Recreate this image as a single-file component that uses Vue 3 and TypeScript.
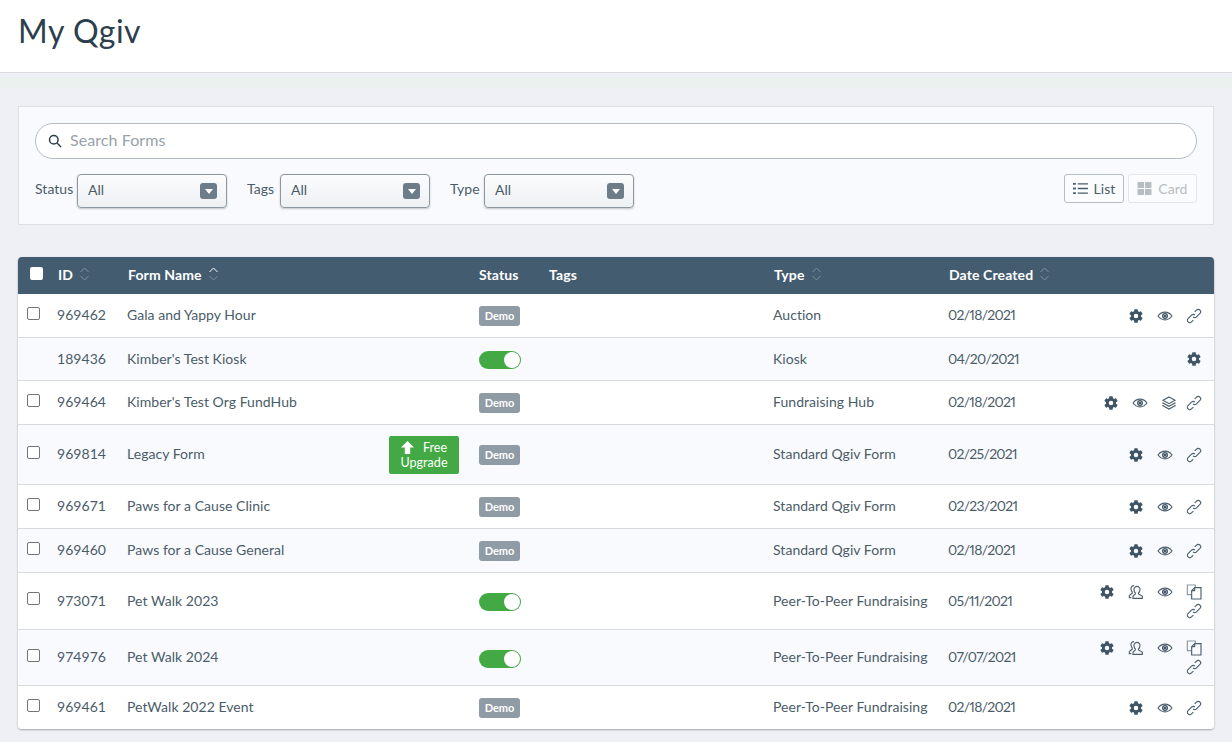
<script setup lang="ts">
interface Icon { fill?: string[]; stroke?: string[]; light?: string[] }
interface Row {
  id: string; name: string; status: 'demo' | 'on'; type: string; date: string;
  h: number; check: boolean; upgrade?: boolean; actions: string[]; tight?: boolean;
}
const gear = 'M19.14 12.94c.04-.3.06-.61.06-.94 0-.32-.02-.64-.07-.94l2.03-1.58a.49.49 0 0 0 .12-.61l-1.92-3.32a.488.488 0 0 0-.59-.22l-2.39.96c-.5-.38-1.03-.7-1.62-.94l-.36-2.54a.484.484 0 0 0-.48-.41h-3.84c-.24 0-.43.17-.47.41l-.36 2.54c-.59.24-1.13.57-1.62.94l-2.39-.96c-.22-.08-.47 0-.59.22L2.74 8.87c-.12.21-.08.47.12.61l2.03 1.58c-.05.3-.09.63-.09.94s.02.64.07.94l-2.03 1.58a.49.49 0 0 0-.12.61l1.92 3.32c.12.22.37.29.59.22l2.39-.96c.5.38 1.03.7 1.62.94l.36 2.54c.05.24.24.41.48.41h3.84c.24 0 .44-.17.47-.41l.36-2.54c.59-.24 1.13-.56 1.62-.94l2.39.96c.22.08.47 0 .59-.22l1.92-3.32c.12-.22.07-.47-.12-.61l-2.01-1.58zM12 15.2a3.2 3.2 0 1 1 0-6.4 3.2 3.2 0 0 1 0 6.4z'
const icons: Record<string, Icon> = {
  gear: { fill: [gear] },
  eye: {
    stroke: ['M1.500 12c2.800-3.900 6.300-5.800 10.500-5.800S19.700 8.100 22.500 12c-2.800 3.900-6.300 5.800-10.500 5.800S4.300 15.900 1.500 12z'],
    fill: ['M12 7.500a4.500 4.500 0 1 1 0 9 4.500 4.500 0 0 1 0-9zM12 9.500a2.500 2.500 0 1 0 0 5 2.500 2.500 0 0 0 0-5z', 'M12 10a2 2 0 1 1 0 4 2 2 0 0 1 0-4z'],
  },
  link: {
    stroke: [
      'M13.400 10.600a3.600 3.600 0 0 0-5.100 0L3.100 15.800a3.600 3.600 0 0 0 5.100 5.100l2.800-2.800',
      'M10.600 13.400a3.600 3.600 0 0 0 5.100 0l5.200-5.200a3.600 3.600 0 0 0-5.100-5.100L13 5.900',
    ],
  },
  layers: {
    stroke: [
      'M12 3l9 5-9 5-9-5z',
      'M4 11.500l-1 .5 9 5 9-5-1-.5',
      'M4 15.500l-1 .5 9 5 9-5-1-.5',
    ],
  },
  people: {
    stroke: [
      'M13.500 3.500a4.500 4.500 0 0 1 4.500 4.800c0 2.200-1 4.200-2.300 5.200v1.500c0 .8 5 1.700 5.800 3.500v3H7.500v-3c.8-1.800 3.500-2.700 3.500-3.500v-1.500C9.700 12.500 9 10.500 9 8.300a4.500 4.500 0 0 1 4.500-4.800z',
      'M9 2.500A4.300 4.300 0 0 0 4.500 7.300c0 1.800.8 3.600 1.800 4.500v2C5.500 14.800 3 15.500 2 17.500v3h3',
    ],
  },
  copy: {
    light: ['M8 16H2V1.500h12V5'],
    stroke: ['M13 5.500h9.500v17H8.500V10z', 'M13 5.500V10H8.500'],
  },
}
const S = ['gear', 'eye', 'link']
const P = ['gear', 'people', 'eye', 'copy', 'link']
const rows: Row[] = [
  { id: '969462', name: 'Gala and Yappy Hour', status: 'demo', type: 'Auction', date: '02/18/2021', h: 44, check: true, actions: S },
  { id: '189436', name: "Kimber's Test Kiosk", status: 'on', type: 'Kiosk', date: '04/20/2021', h: 43, check: false, actions: ['gear'] },
  { id: '969464', name: "Kimber's Test Org FundHub", status: 'demo', type: 'Fundraising Hub', date: '02/18/2021', h: 44, check: true, actions: ['gear', 'eye', 'layers', 'link'], tight: true },
  { id: '969814', name: 'Legacy Form', status: 'demo', type: 'Standard Qgiv Form', date: '02/25/2021', h: 60, check: true, upgrade: true, actions: S },
  { id: '969671', name: 'Paws for a Cause Clinic', status: 'demo', type: 'Standard Qgiv Form', date: '02/23/2021', h: 44, check: true, actions: S },
  { id: '969460', name: 'Paws for a Cause General', status: 'demo', type: 'Standard Qgiv Form', date: '02/18/2021', h: 44, check: true, actions: S },
  { id: '973071', name: 'Pet Walk 2023', status: 'on', type: 'Peer-To-Peer Fundraising', date: '05/11/2021', h: 57, check: true, actions: P },
  { id: '974976', name: 'Pet Walk 2024', status: 'on', type: 'Peer-To-Peer Fundraising', date: '07/07/2021', h: 56, check: true, actions: P },
  { id: '969461', name: 'PetWalk 2022 Event', status: 'demo', type: 'Peer-To-Peer Fundraising', date: '02/18/2021', h: 43, check: true, actions: S },
]
const filters = [
  { label: 'Status', w: 38 },
  { label: 'Tags', w: 29 },
  { label: 'Type', w: 30 },
]
</script>

<template>
  <div class="page">
    <header class="top"><h1>My Qgiv</h1></header>
    <main class="content">
      <section class="filters">
        <div class="search">
          <svg class="mag" viewBox="0 0 14 14"><circle cx="5.800" cy="5.800" r="4.300" /><path d="M9 9l4 4" /></svg>
          <span>Search Forms</span>
        </div>
        <div class="controls">
          <div class="selects">
            <label v-for="f in filters" :key="f.label" class="field">
              <span class="lbl" :style="{ width: f.w + 'px' }">{{ f.label }}</span>
              <span class="select"><span class="val">All</span><i class="caret"></i></span>
            </label>
          </div>
          <div class="views">
            <button class="view active">
              <svg viewBox="0 0 16 14"><path d="M0 1h3v2H0zM0 6h3v2H0zM0 11h3v2H0zM5 1.300h11v1.400H5zM5 6.300h11v1.400H5zM5 11.300h11v1.400H5z" /></svg>List
            </button>
            <button class="view">
              <svg viewBox="0 0 15 14"><path d="M0 0h7v6.500H0zM8 0h7v6.500H8zM0 7.500h7V14H0zM8 7.500h7V14H8z" /></svg>Card
            </button>
          </div>
        </div>
      </section>

      <section class="table">
        <div class="row head">
          <div class="c-check"><i class="head-box"></i></div>
          <div class="c-id">ID <svg class="sort" viewBox="0 0 10 16"><path d="M1 6l4-4 4 4M1 10l4 4 4-4" /></svg></div>
          <div class="c-name">Form Name <svg class="sort up" viewBox="0 0 10 16"><path class="b" d="M1 6l4-4 4 4" /><path d="M1 10l4 4 4-4" /></svg></div>
          <div class="c-status">Status</div>
          <div class="c-tags">Tags</div>
          <div class="c-type">Type <svg class="sort" viewBox="0 0 10 16"><path d="M1 6l4-4 4 4M1 10l4 4 4-4" /></svg></div>
          <div class="c-date">Date Created <svg class="sort" viewBox="0 0 10 16"><path d="M1 6l4-4 4 4M1 10l4 4 4-4" /></svg></div>
          <div></div>
        </div>
        <div v-for="r in rows" :key="r.id" class="row body" :style="{ height: r.h + 'px' }">
          <div class="c-check"><input v-if="r.check" type="checkbox" class="box" /></div>
          <div class="c-id cell">{{ r.id }}</div>
          <div class="c-name">
            <span class="cell">{{ r.name }}</span>
            <a v-if="r.upgrade" class="upgrade">
              <span class="up-line"><svg viewBox="0 0 12 12"><path d="M6 0l6 6H8.500v6h-5V6H0z" /></svg>Free</span>
              <span>Upgrade</span>
            </a>
          </div>
          <div class="c-status">
            <span v-if="r.status === 'demo'" class="badge">Demo</span>
            <span v-else class="toggle"><i></i></span>
          </div>
          <div class="c-tags"></div>
          <div class="c-type cell">{{ r.type }}</div>
          <div class="c-date cell date">{{ r.date }}</div>
          <div class="c-actions" :class="{ tight: r.tight }">
            <svg v-for="a in r.actions" :key="a" class="icon" :class="'i-' + a" viewBox="0 0 24 24">
              <path v-for="d in icons[a].fill" :key="d" class="f" :d="d" />
              <path v-for="d in icons[a].light" :key="d" class="l" :d="d" />
              <path v-for="d in icons[a].stroke" :key="d" class="s" :d="d" />
            </svg>
          </div>
        </div>
      </section>
    </main>
  </div>
</template>

<style>
html, body { margin: 0; background: #eef0f5; }
</style>

<style scoped>
.page { width: 1232px; height: 742px; overflow: hidden; background: #eef0f5; font-family: Lato, "Open Sans", sans-serif; color: #4b5c69; font-size: 14px; letter-spacing: .04px; }
.top { height: 73px; box-sizing: border-box; background: #fff; border-bottom: 1px solid #d8dcdf; display: flex; align-items: center; padding: 0 18px 11px; }
h1 { margin: 0; font-size: 32px; font-weight: 400; color: #2d3f4d; letter-spacing: .55px; }
.content { padding: 33px 18px 0; background: linear-gradient(#eef0f5 4px, #ebf1ef 4px, #ebf1ef 15px, #eef0f5 15px); }
.filters { height: 119px; box-sizing: border-box; background: #f9fafd; border: 1px solid #dcdfe4; padding: 16px 16px 0 16px; }
.search { height: 36px; box-sizing: border-box; border: 1px solid #b4bbc1; border-radius: 18px; background: #fff; display: flex; align-items: center; gap: 8px; padding: 0 0 0 12px; font-size: 16px; letter-spacing: .08px; color: #99a2aa; }
.search span { margin-top: -3px; }
.mag { width: 14px; height: 14px; fill: none; stroke: #2d3f4d; stroke-width: 1.500; }
.controls { display: flex; justify-content: space-between; margin-top: 15px; }
.selects { display: flex; gap: 20px; }
.field { display: flex; gap: 4px; align-items: flex-start; }
.lbl { line-height: 30px; white-space: nowrap; }
.select { width: 150px; height: 34px; box-sizing: border-box; border: 1px solid #8d979f; border-radius: 4px; background: linear-gradient(#fbfcfd, #eef1f4); box-shadow: 0 1px 2px rgba(60, 70, 80, .3); display: flex; align-items: center; justify-content: space-between; padding: 0 9px 0 10px; }
.val { margin-top: -3px; }
.caret { width: 17px; height: 16px; border-radius: 3px; background: #6c7c88; position: relative; }
.caret::after { content: ""; position: absolute; left: 4.500px; top: 6px; border: 4px solid transparent; border-top: 5px solid #fff; border-bottom: 0; }
.views { display: flex; gap: 4px; align-items: flex-start; }
.view { height: 29px; box-sizing: border-box; border: 1px solid #e2e5e9; border-radius: 3px; background: #fbfcfd; display: flex; align-items: center; gap: 6px; padding: 0 8.500px; font: inherit; font-size: 14px; letter-spacing: inherit; color: #b6bdc3; }
.view svg { width: 15px; height: 13px; fill: #b6bdc3; }
.view.active { border-color: #b5bcc2; color: #4b5c69; padding: 0 7.500px; }
.view.active svg { fill: #4b5c69; }
.table { margin-top: 32px; background: #fff; border-radius: 4px; box-shadow: 0 1px 2px rgba(60, 70, 80, .45); overflow: hidden; }
.row { display: grid; grid-template-columns: 39px 70px 352px 70px 224px 175px 130px 136px; align-items: center; }
.head { height: 37px; background: #435c6f; color: #fff; font-weight: 700; letter-spacing: .12px; }
.head > div { padding-left: 1px; display: flex; align-items: center; gap: 6px; padding-bottom: 3px; }
.head > .c-status, .head > .c-tags { padding-left: 0; }
.head-box { width: 13px; height: 13px; margin: 0 0 1px 11px; background: #fff; border-radius: 2px; }
.sort { width: 11px; height: 16px; fill: none; stroke: #7f919e; stroke-width: 1; }
.sort .b { stroke: #fff; }
.body { box-sizing: border-box; border-bottom: 1px solid #d8dadd; background: #fff; }
.body:nth-child(odd) { background: #f9fafd; }
.body:last-child { border-bottom: 0; }
.cell { margin-top: -2px; }
.date { font-variant-numeric: proportional-nums; font-feature-settings: "pnum" 1; letter-spacing: -.7px; }
.box { appearance: none; width: 13px; height: 13px; margin: 0 0 5px 9px; display: block; border: 1px solid #6f7579; border-radius: 2px; background: #fff; }
.c-name { display: flex; align-items: center; justify-content: space-between; padding-right: 20px; }
.head > .c-name { justify-content: flex-start; }
.upgrade { width: 70px; height: 38px; box-sizing: border-box; padding-top: 4px; background: #43a944; color: #fff; border-radius: 2px; font-size: 12.500px; line-height: 15px; display: flex; flex-direction: column; align-items: center; }
.up-line { display: flex; align-items: center; gap: 9px; }
.up-line svg { width: 13px; height: 13px; fill: #fff; }
.badge { display: block; width: 41px; height: 20px; border-radius: 3px; background: #8f9ba5; color: #fff; font-size: 11px; font-weight: 700; line-height: 20px; text-align: center; letter-spacing: 0; margin-top: 1px; }
.toggle { display: block; width: 42px; height: 18px; border-radius: 9px; background: #43a944; position: relative; margin-top: 2px; }
.toggle i { position: absolute; right: 1px; top: 1px; width: 16px; height: 16px; border-radius: 50%; background: #fff; }
.c-actions { display: flex; flex-wrap: wrap; justify-content: flex-end; align-items: center; row-gap: 3px; padding-right: 12px; }
.icon { width: 16px; height: 16px; margin-left: 13px; }
.tight .icon:last-child { margin-left: 9px; }
.f { fill: #3f5566; fill-rule: evenodd; }
.s { fill: none; stroke: #4b5f6e; stroke-width: 1.700; }
.l { fill: none; stroke: #8a98a3; stroke-width: 1.700; }
.i-gear { transform: scale(1.050); }
</style>
